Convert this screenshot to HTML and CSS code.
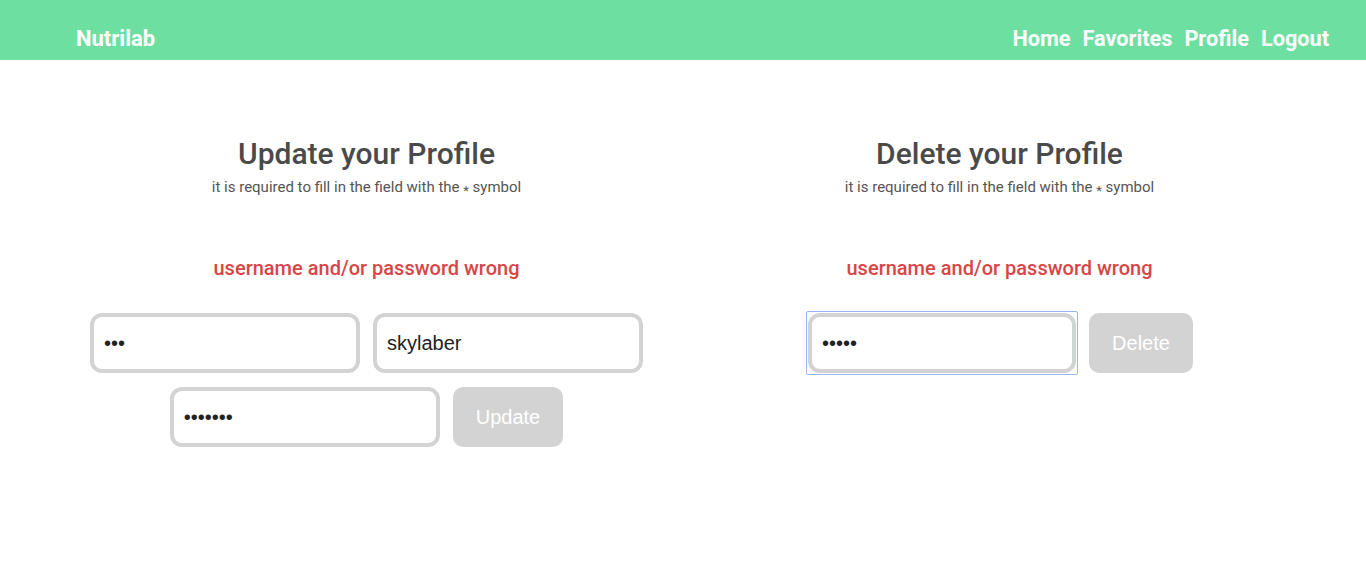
FILE: index.html
```html
<!DOCTYPE html>
<html lang="en">
<head>
<meta charset="utf-8">
<title>Nutrilab</title>
<link rel="stylesheet" href="styles.css">
</head>
<body>
<header class="topbar">
  <a class="brand" href="#">Nutrilab</a>
  <nav class="nav">
    <a href="#">Home</a>
    <a href="#">Favorites</a>
    <a href="#">Profile</a>
    <a href="#">Logout</a>
  </nav>
</header>
<main class="content">
  <section class="panel">
    <h2 class="panel-title">Update your Profile</h2>
    <p class="panel-sub">it is required to fill in the field with the <span class="star">*</span> symbol</p>
    <p class="panel-error">username and/or password wrong</p>
    <form class="form">
      <div class="row">
        <input class="field" type="password" value="abc">
        <input class="field" type="text" value="skylaber">
      </div>
      <div class="row">
        <input class="field" type="password" value="abcdefg">
        <button class="btn" type="button">Update</button>
      </div>
    </form>
  </section>
  <section class="panel">
    <h2 class="panel-title">Delete your Profile</h2>
    <p class="panel-sub">it is required to fill in the field with the <span class="star">*</span> symbol</p>
    <p class="panel-error">username and/or password wrong</p>
    <form class="form">
      <div class="row row-delete">
        <span class="focus-ring"><input class="field" type="password" value="abcde"></span>
        <button class="btn" type="button">Delete</button>
      </div>
    </form>
  </section>
</main>
</body>
</html>
```
FILE: styles.css
```css
* { box-sizing: border-box; }
html, body { margin: 0; padding: 0; background: #fff; }
body { font-family: Roboto, "Liberation Sans", Arial, sans-serif; }

.topbar {
  height: 60px;
  background: #6ddfa1;
  display: flex;
  justify-content: space-between;
  align-items: flex-start;
  padding: 26px 37px 0 76px;
}
.brand, .nav a {
  color: #fff;
  text-decoration: none;
  font-weight: 700;
  font-size: 21.7px;
  line-height: 26px;
}
.brand { font-size: 22px; }
.nav { display: flex; gap: 12px; }

.content {
  display: grid;
  grid-template-columns: 1fr 1fr;
  padding: 0 50px;
}
.panel {
  display: flex;
  flex-direction: column;
  align-items: center;
  text-align: center;
}
.panel-title {
  margin: 76px 0 0;
  font-size: 30px;
  line-height: 36px;
  font-weight: 500;
  color: #4a4a4a;
}
.panel-sub {
  margin: 6px 0 0;
  font-size: 15px;
  line-height: 18px;
  color: #555;
}
.star {
  font-size: 13px;
  line-height: 0;
  vertical-align: -3px;
}
.panel-error {
  margin: 60px 0 0;
  font-size: 20px;
  line-height: 24px;
  font-weight: 500;
  color: #d94545;
}
.form {
  margin-top: 33px;
  display: flex;
  flex-direction: column;
  align-items: center;
  gap: 14px;
}
.row { display: flex; gap: 13px; }
.row-delete { gap: 11px; margin-top: -2px; }
.field {
  width: 270px;
  height: 60px;
  border: 4px solid #d3d3d3;
  border-radius: 12px;
  padding: 0 10px;
  font-family: "Liberation Sans", Arial, sans-serif;
  font-size: 20px;
  color: #222;
  background: #fff;
  outline: none;
}
.focus-ring {
  display: flex;
  border: 1px solid #9ab8f0;
  border-radius: 2px;
  padding: 1px;
}
.focus-ring .field { width: 268px; }
.row-delete .btn { margin-top: 2px; }
.btn {
  height: 60px;
  padding: 0 23px;
  border: none;
  border-radius: 10px;
  background: #d3d3d3;
  color: #fff;
  font-family: "Liberation Sans", Arial, sans-serif;
  font-size: 20px;
}
```
